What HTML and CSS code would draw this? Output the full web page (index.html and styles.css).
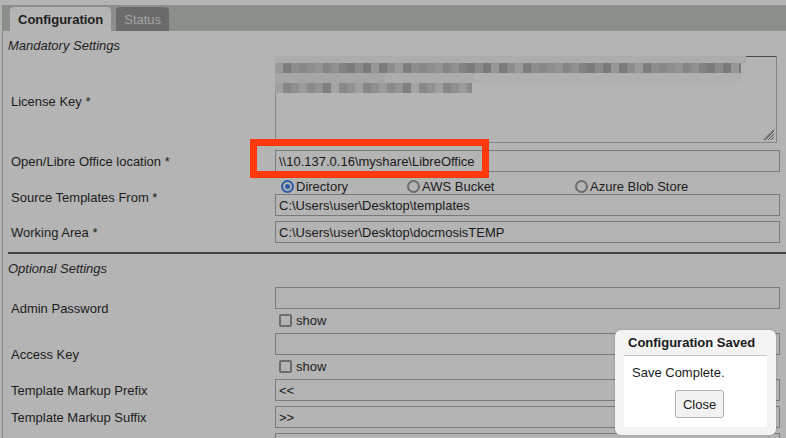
FILE: index.html
```html
<!DOCTYPE html>
<html>
<head>
<meta charset="utf-8">
<link rel="stylesheet" href="styles.css">
</head>
<body>
<div class="widget">
  <div class="tabbar">
    <div class="tab active">Configuration</div>
    <div class="tab">Status</div>
  </div>
  <div class="panel">
    <div class="section-title">Mandatory Settings</div>
    <div class="form form-first">
      <label class="lbl">License Key *</label>
      <div class="ctl ta-wrap">
        <textarea class="ta"></textarea>
        <div class="blur">
          <div class="blur-top"></div>
          <div class="blur-r1"></div>
          <div class="blur-r2"></div>
          <div class="blur-r3"></div>
        </div>
        <svg class="grip" width="12" height="12" viewBox="0 0 12 12">
          <path d="M11 2 L2 11 M11 5 L5 11 M11 8 L8 11 M11 0.5 L0.5 11" stroke="#555" stroke-width="1" fill="none"/>
        </svg>
      </div>

      <label class="lbl">Open/Libre Office location *</label>
      <div class="ctl"><input class="inp" type="text" value="\\10.137.0.16\myshare\LibreOffice"></div>

      <label class="lbl">Source Templates From *</label>
      <div class="ctl">
        <div class="radios">
          <span class="opt opt1"><span class="radio checked"></span>Directory</span>
          <span class="opt opt2"><span class="radio"></span>AWS Bucket</span>
          <span class="opt"><span class="radio"></span>Azure Blob Store</span>
        </div>
        <input class="inp" type="text" value="C:\Users\user\Desktop\templates">
      </div>

      <label class="lbl">Working Area *</label>
      <div class="ctl"><input class="inp" type="text" value="C:\Users\user\Desktop\docmosisTEMP"></div>
    </div>

    <div class="sep"></div>

    <div class="section-title">Optional Settings</div>
    <div class="form form-second">
      <label class="lbl">Admin Password</label>
      <div class="ctl">
        <input class="inp" type="password" value="">
        <div class="chkrow"><span class="chk"></span>show</div>
      </div>

      <label class="lbl">Access Key</label>
      <div class="ctl">
        <input class="inp" type="password" value="">
        <div class="chkrow"><span class="chk"></span>show</div>
      </div>

      <label class="lbl">Template Markup Prefix</label>
      <div class="ctl"><input class="inp" type="text" value="&lt;&lt;"></div>

      <label class="lbl">Template Markup Suffix</label>
      <div class="ctl"><input class="inp" type="text" value="&gt;&gt;"></div>

      <label class="lbl"></label>
      <div class="ctl"><input class="inp" type="text" value=""></div>
    </div>
  </div>
</div>

<div class="highlight"></div>

<div class="dialog">
  <div class="dlg-title">Configuration Saved</div>
  <div class="dlg-body">
    <div class="dlg-msg">Save Complete.</div>
    <div class="dlg-actions"><button class="btn">Close</button></div>
  </div>
</div>
</body>
</html>
```

FILE: styles.css
```css
html, body {
  margin: 0;
  padding: 0;
  background: #b4b4b4;
  overflow: hidden;
  width: 786px;
  height: 438px;
}
body {
  padding-top: 5px;
  box-sizing: border-box;
  font-family: "Liberation Sans", Arial, sans-serif;
  font-size: 13px;
  color: #1c1c1c;
}
.widget {
  margin-left: 2px;
  border-left: 1px solid #8a8a8a;
}
.tabbar {
  height: 26px;
  background: #8b8f8a;
  display: flex;
  align-items: flex-end;
  gap: 5px;
  padding-left: 7px;
}
.tab {
  height: 24px;
  line-height: 25px;
  padding: 0 8px;
  border-radius: 4px 4px 0 0;
  background: #6b6b6b;
  color: #a4a4a4;
}
.tab.active {
  background: #b4b4b4;
  color: #1e1e1e;
  font-weight: bold;
}
.section-title {
  font-style: italic;
  padding: 6px 0 0 5px;
  line-height: 18px;
  color: #222;
}
.form {
  display: grid;
  grid-template-columns: 272px 505px;
  row-gap: 5px;
}
.form-first { margin-top: 1px; }
.form-second { margin-top: 9px; }
.lbl {
  align-self: center;
  padding: 2px 0 0 8px;
  line-height: 16px;
}
.ctl { display: flex; flex-direction: column; }
.inp {
  box-sizing: border-box;
  height: 22px;
  width: 505px;
  margin: 0;
  border: 1px solid #7a7a7a;
  background: #b4b4b4;
  font-family: "Liberation Sans", Arial, sans-serif;
  font-size: 13px;
  color: #1a1a1a;
  padding: 1px 3px 0;
  outline: none;
}
.ta-wrap { position: relative; margin-bottom: 2px; }
.ta {
  box-sizing: border-box;
  width: 502px;
  height: 87px;
  margin: 0;
  border: 1px solid #858585;
  border-top-color: #4a4a4a;
  background: #b4b4b4;
  resize: none;
  display: block;
}
.grip {
  position: absolute;
  left: 488px;
  top: 73px;
}
.blur {
  position: absolute;
  left: 0;
  top: 0;
}
.blur-top { width: 471px; height: 7px; background: #acacac; }
.blur-r1 {
  width: 466px; height: 10px;
  background: repeating-linear-gradient(90deg,
    #9a9a98 0 8px, #7c7c7c 8px 16px, #8d8d8d 16px 24px, #878787 24px 32px,
    #8e8e8e 32px 40px, #939393 40px 48px, #858585 48px 56px, #8f8f8f 56px 64px,
    #838383 64px 72px, #7a7c7c 72px 80px, #8b8b8b 80px 88px, #7a7a7a 88px 96px,
    #979797 96px 104px, #7b7b7b 104px 112px, #8d8d8d 112px 120px);
}
.blur-r2 {
  width: 466px; height: 10px;
  background: linear-gradient(90deg, #a6a6a4 0 110px, #acacac 110px 200px, #b0b0b0 200px 466px);
}
.blur-r3 {
  width: 197px; height: 10px;
  background: repeating-linear-gradient(90deg,
    #a0a09e 0 8px, #868686 8px 16px, #8e8e8e 16px 24px, #9b9b9b 24px 32px,
    #8a8a8a 32px 40px, #949494 40px 48px, #7f7f7f 48px 56px, #a4a4a4 56px 64px,
    #8b8888 64px 72px, #919191 72px 80px);
}
.radios {
  display: flex;
  height: 17px;
  align-items: center;
  padding-left: 6px;
  padding-top: 1px;
  box-sizing: border-box;
}
.opt { display: flex; align-items: center; }
.opt1 { width: 126px; }
.opt2 { width: 168px; }
.radio {
  box-sizing: border-box;
  width: 13px;
  height: 13px;
  border-radius: 50%;
  border: 2px solid #6c6c6c;
  margin-right: 2px;
  position: relative;
}
.radio.checked { border-color: #2b5ca6; }
.radio.checked::after {
  content: "";
  position: absolute;
  left: 2px; top: 2px;
  width: 5px; height: 5px;
  border-radius: 50%;
  background: #2b5ca6;
}
.chkrow {
  display: flex;
  align-items: center;
  height: 16px;
  margin-top: 3px;
  padding-left: 4px;
}
.chk {
  box-sizing: border-box;
  width: 13px; height: 13px;
  border: 2px solid #6c6c6c;
  border-radius: 2px;
  margin-right: 4px;
}
.sep {
  height: 2px;
  background: #454545;
  margin: 9px 0 0 5px;
}
.highlight {
  position: absolute;
  left: 250px;
  top: 139px;
  width: 239px;
  height: 39px;
  box-sizing: border-box;
  border: 7px solid #fe3a0c;
}
.dialog {
  position: absolute;
  left: 615px;
  top: 330px;
  width: 161px;
  height: 105px;
  box-sizing: border-box;
  background: #f3f3f3;
  border-radius: 6px;
  padding: 0 9px 8px;
  box-shadow: 0 0 2px rgba(0,0,0,0.25);
  display: flex;
  flex-direction: column;
}
.dlg-title {
  font-weight: bold;
  color: #1a1a1a;
  line-height: 25px;
  padding-left: 4px;
  border-bottom: 1px solid #c4c4c4;
}
.dlg-body {
  flex: 1;
  background: #fff;
  padding: 9px 0 0 8px;
}
.dlg-msg { line-height: 16px; color: #1a1a1a; }
.dlg-actions {
  display: flex;
  justify-content: center;
  padding-left: 0;
  margin-top: 9px;
}
.btn {
  box-sizing: border-box;
  width: 49px;
  height: 28px;
  font-family: "Liberation Sans", Arial, sans-serif;
  font-size: 13px;
  color: #1a1a1a;
  background: #f2f2f2;
  border: 1px solid #b0b0b0;
  border-radius: 3px;
  padding: 0;
}
```
